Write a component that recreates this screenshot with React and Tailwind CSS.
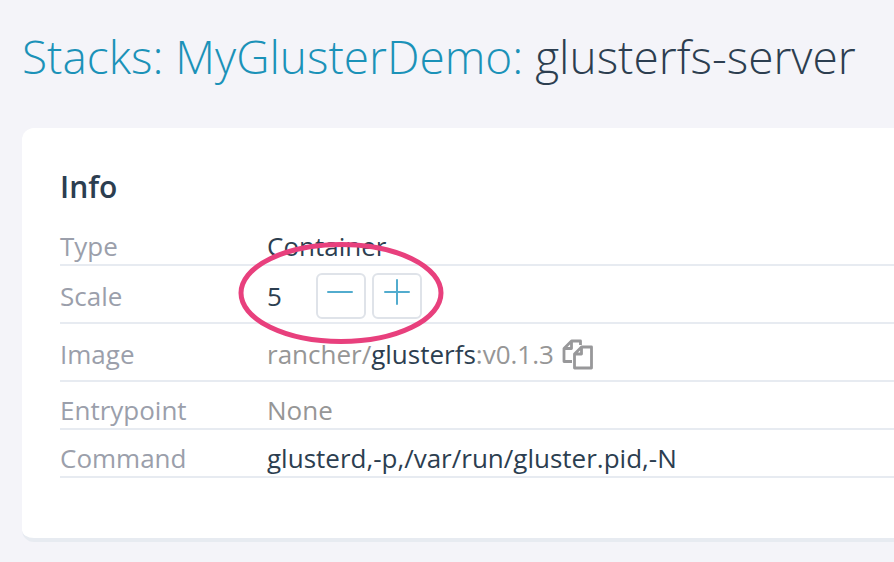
const label = 'w-[207px] shrink-0 text-[#9b9fab]'
const scaleBtn = 'flex h-[46px] w-[50px] justify-center rounded-md border-2 border-[#dfe3e9] bg-white pt-1 text-[#52acce]'

function Row({ name, className, children }) {
  return (
    <div className={`flex items-center border-b-2 border-[#e7ebf1] ${className}`}>
      <dt className={label}>{name}</dt>
      <dd className="flex items-center text-[#2c3e50]">{children}</dd>
    </div>
  )
}

export default function App() {
  return (
    <div className="min-h-screen overflow-hidden bg-[#f4f4f9] pt-[26px] pl-[22px] font-['Open_Sans',sans-serif]">
      <h1 className="text-[46px] leading-[60px] font-light whitespace-nowrap text-[#2c3e50]">
        <a href="#stacks" className="text-[#1b92b8]">Stacks:</a>{' '}
        <a href="#stack" className="text-[#1b92b8]">MyGlusterDemo:</a>{' '}
        glusterfs-server
      </h1>

      <section className="mt-[42px] rounded-l-xl border-b-4 border-[#e7ebf1] bg-white pt-[42px] pb-[60px] pl-[38px]">
        <h2 className="text-[30px] leading-[34px] font-semibold text-[#2c3e50]">Info</h2>
        <dl className="mt-6 text-[26px] leading-[34px]">
          <Row name="Type" className="h-[38px]">Container</Row>
          <Row name="Scale" className="h-[58px] pt-1">
            <span className="w-[49px]">5</span>
            <span className="relative flex gap-[6px]">
              <button type="button" aria-label="Scale down" className={scaleBtn}>
                <svg width="28" height="28" viewBox="0 0 28 28" stroke="currentColor" strokeWidth="2" strokeLinecap="round"><path d="M1 13h24" /></svg>
              </button>
              <button type="button" aria-label="Scale up" className={scaleBtn}>
                <svg width="28" height="28" viewBox="0 0 28 28" stroke="currentColor" strokeWidth="2" strokeLinecap="round"><path d="M2 13h24M14 1v24" /></svg>
              </button>
              {/* highlight ring around the scale controls */}
              <svg className="pointer-events-none absolute -top-8 -left-20 max-w-none" width="210" height="106" viewBox="0 0 210 106" fill="none">
                <ellipse cx="105" cy="52" rx="100" ry="48.5" stroke="#e8407d" strokeWidth="5" />
              </svg>
            </span>
          </Row>
          <Row name="Image" className="h-[58px] pt-1">
            <span className="text-[#969696]">rancher/</span>glusterfs<span className="text-[#969696]">:v0.1.3</span>
            <button type="button" aria-label="Copy image name" className="ml-2 text-[#98989a]">
              <svg width="32" height="32" viewBox="0 0 32 32" fill="none" stroke="currentColor" strokeWidth="2.8" strokeLinejoin="round">
                <path d="M10 23.5H2V10.5L9.5 3H18.5V7M9.5 3v7.5H2" />
                <path d="M12.5 16l7-7h10v21h-17zM19.5 9v7h-7" />
              </svg>
            </button>
          </Row>
          <Row name="Entrypoint" className="h-12 pt-[10px]"><span className="text-[#969696]">None</span></Row>
          <Row name="Command" className="h-12 pt-[10px]">glusterd,-p,/var/run/gluster.pid,-N</Row>
        </dl>
      </section>
    </div>
  )
}
